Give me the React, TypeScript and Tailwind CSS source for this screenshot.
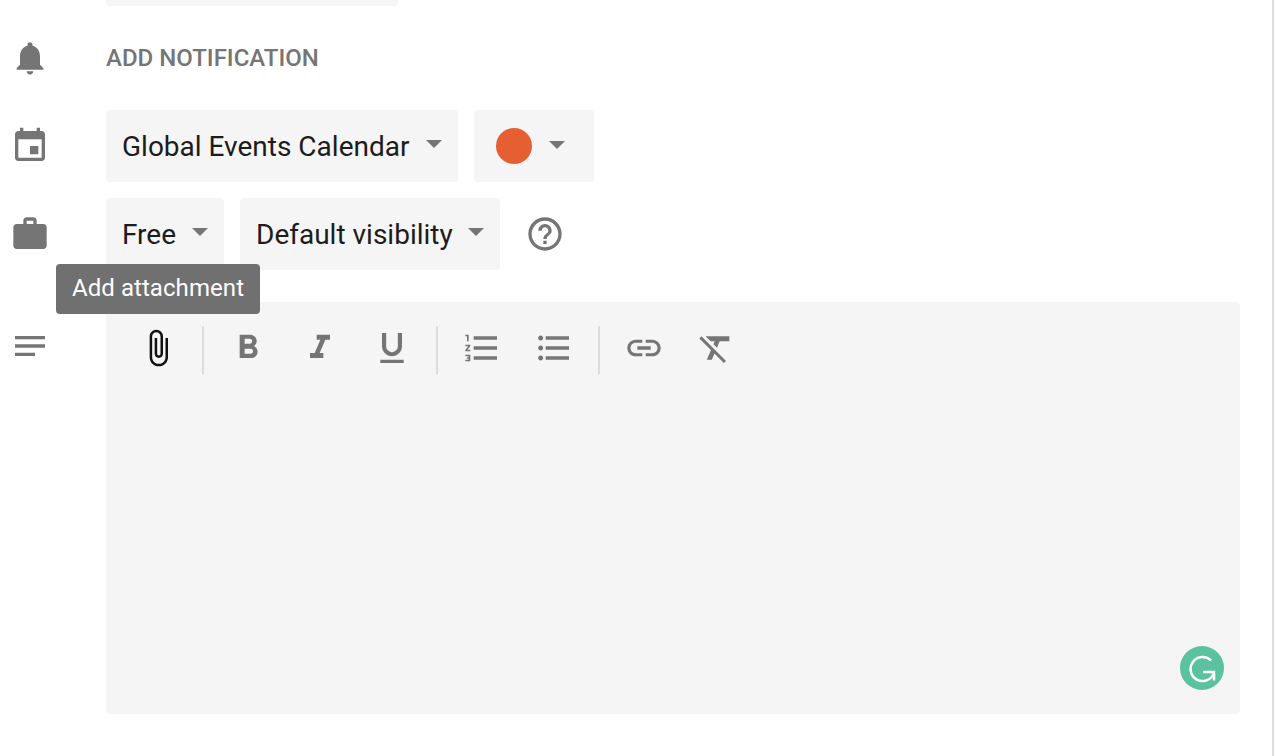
const PATHS = {
  bell: 'M12 22c1.1 0 2-.9 2-2h-4c0 1.1.89 2 2 2zm6-6v-5c0-3.07-1.64-5.64-4.5-6.32V4c0-.83-.67-1.5-1.5-1.5s-1.5.67-1.5 1.5v.68C7.63 5.36 6 7.92 6 11v5l-2 2v1h16v-1l-2-2z',
  event: 'M17 12h-5v5h5v-5zM16 1v2H8V1H6v2H5c-1.11 0-1.99.9-1.99 2L3 19c0 1.1.89 2 2 2h14c1.1 0 2-.9 2-2V5c0-1.1-.9-2-2-2h-1V1h-2zm3 18H5V8h14v11z',
  work: 'M20 6h-4V4c0-1.11-.89-2-2-2h-4c-1.11 0-2 .89-2 2v2H4c-1.11 0-1.99.89-1.99 2L2 19c0 1.11.89 2 2 2h16c1.11 0 2-.89 2-2V8c0-1.11-.89-2-2-2zm-6 0h-4V4h4v2z',
  notes: 'M3 18h12v-2H3v2zM3 6v2h18V6H3zm0 7h18v-2H3v2z',
  help: 'M11 18h2v-2h-2v2zm1-16C6.48 2 2 6.48 2 12s4.48 10 10 10 10-4.48 10-10S17.52 2 12 2zm0 18c-4.41 0-8-3.59-8-8s3.59-8 8-8 8 3.59 8 8-3.59 8-8 8zm0-14c-2.21 0-4 1.79-4 4h2c0-1.1.9-2 2-2s2 .9 2 2c0 2-3 1.75-3 5h2c0-2.25 3-2.5 3-5 0-2.21-1.79-4-4-4z',
  attach: 'M16.5 6v11.5c0 2.21-1.79 4-4 4s-4-1.79-4-4V5c0-1.38 1.12-2.5 2.5-2.5s2.5 1.12 2.5 2.5v10.5c0 .55-.45 1-1 1s-1-.45-1-1V6H10v9.5c0 1.38 1.12 2.5 2.5 2.5s2.5-1.12 2.5-2.5V5c0-2.21-1.79-4-4-4S7 2.79 7 5v12.5c0 3.04 2.46 5.5 5.5 5.5s5.5-2.46 5.5-5.5V6h-1.5z',
  bold: 'M15.6 10.79c.97-.67 1.65-1.77 1.65-2.79 0-2.26-1.75-4-4-4H7v14h7.04c2.09 0 3.71-1.7 3.71-3.79 0-1.52-.86-2.82-2.15-3.42zM10 6.5h3c.83 0 1.5.67 1.5 1.5s-.67 1.5-1.5 1.5h-3v-3zm3.5 9H10v-3h3.5c.83 0 1.5.67 1.5 1.5s-.67 1.5-1.5 1.5z',
  italic: 'M10 4v3h2.21l-3.42 8H6v3h8v-3h-2.21l3.42-8H18V4z',
  underline: 'M12 17c3.31 0 6-2.69 6-6V3h-2.5v8c0 1.93-1.57 3.5-3.5 3.5S8.5 12.93 8.5 11V3H6v8c0 3.31 2.69 6 6 6zm-7 2v2h14v-2H5z',
  numbered: 'M2 17h2v.5H3v1h1v.5H2v1h3v-4H2v1zm1-9h1V4H2v1h1v3zm-1 3h1.8L2 13.1v.9h3v-1H3.2L5 10.9V10H2v1zm5-6v2h14V5H7zm0 14h14v-2H7v2zm0-6h14v-2H7v2z',
  bulleted: 'M4 10.5c-.83 0-1.5.67-1.5 1.5s.67 1.5 1.5 1.5 1.5-.67 1.5-1.5-.67-1.5-1.5-1.5zm0-6c-.83 0-1.5.67-1.5 1.5S3.17 7.5 4 7.5 5.5 6.83 5.5 6 4.83 4.5 4 4.5zm0 12c-.83 0-1.5.68-1.5 1.5s.68 1.5 1.5 1.5 1.5-.68 1.5-1.5-.67-1.5-1.5-1.5zM7 19h14v-2H7v2zm0-6h14v-2H7v2zm0-8v2h14V5H7z',
  link: 'M3.9 12c0-1.71 1.39-3.1 3.1-3.1h4V7H7c-2.76 0-5 2.24-5 5s2.24 5 5 5h4v-1.9H7c-1.71 0-3.1-1.39-3.1-3.1zM8 13h8v-2H8v2zm9-6h-4v1.9h4c1.71 0 3.1 1.39 3.1 3.1s-1.39 3.1-3.1 3.1h-4V17h4c2.76 0 5-2.24 5-5s-2.24-5-5-5z',
  clear: 'M3.27 5L2 6.27l6.97 6.97L6.5 19h3l1.57-3.66L16.73 21 18 19.73 3.55 5.27 3.27 5zM6 5v.18L8.82 8h2.4l-.72 1.68 2.1 2.1L14.21 8H20V5H6z',
};

function MdIcon({ d, className = 'text-[#757575]' }: { d: string; className?: string }) {
  return (
    <svg viewBox="0 0 24 24" fill="currentColor" className={`w-10 h-10 shrink-0 ${className}`}>
      <path d={d} />
    </svg>
  );
}

function Caret({ className = 'mb-1' }: { className?: string }) {
  return <span className={`w-0 h-0 border-x-8 border-x-transparent border-t-8 border-t-[#757575] ${className}`} />;
}

function Select({ label, width }: { label: string; width: string }) {
  return (
    <div className={`${width} h-[72px] px-4 flex items-center justify-between rounded bg-[#f5f5f5] text-[28px] text-[#1c1c1c]`}>
      <span className="pt-[2px]">{label}</span>
      <Caret />
    </div>
  );
}

function ToolButton({ d, className }: { d: string; className?: string }) {
  return (
    <button className="w-[72px] h-12 pt-[2px] flex justify-center items-start">
      <MdIcon d={d} className={className} />
    </button>
  );
}

function Divider() {
  return <div className="w-[2px] h-12 mx-2 bg-[#dcdcdc]" />;
}

function Row({ icon, className, children }: { icon: string; className?: string; children: React.ReactNode }) {
  return (
    <div className={`flex items-center ${className ?? ''}`}>
      <div className="w-[106px] pl-[10px] shrink-0">
        <MdIcon d={icon} />
      </div>
      {children}
    </div>
  );
}

export default function App() {
  return (
    <div className="relative w-[1274px] h-screen overflow-hidden bg-white border-r-2 border-[#dedede] font-['Roboto',sans-serif]">
      <div className="ml-[106px] w-[292px] h-[6px] rounded-b bg-[#f5f5f5]" />

      <Row icon={PATHS.bell} className="h-[104px]">
        <span className="text-2xl font-medium uppercase text-[#757575]">Add notification</span>
      </Row>

      <Row icon={PATHS.event}>
        <div className="flex gap-4">
          <Select label="Global Events Calendar" width="w-[352px]" />
          <div className="w-[120px] h-[72px] pl-[22px] flex items-center gap-[17px] rounded bg-[#f5f5f5]">
            <span className="w-9 h-9 rounded-full bg-[#e65f32]" />
            <Caret className="mb-[2px]" />
          </div>
        </div>
      </Row>

      <Row icon={PATHS.work} className="mt-4">
        <div className="flex gap-4">
          <Select label="Free" width="w-[118px]" />
          <Select label="Default visibility" width="w-[260px]" />
        </div>
        <div className="ml-[25px]">
          <MdIcon d={PATHS.help} />
        </div>
      </Row>

      <div className="flex items-start mt-8">
        <div className="w-[106px] pl-[10px] pt-6 shrink-0">
          <MdIcon d={PATHS.notes} />
        </div>
        <div className="relative w-[1134px] h-[412px] pt-6 px-4 rounded bg-[#f5f5f5]">
          <div className="flex">
            <ToolButton d={PATHS.attach} className="text-[#111111]" />
            <Divider />
            <ToolButton d={PATHS.bold} />
            <ToolButton d={PATHS.italic} />
            <ToolButton d={PATHS.underline} />
            <Divider />
            <ToolButton d={PATHS.numbered} />
            <ToolButton d={PATHS.bulleted} />
            <Divider />
            <ToolButton d={PATHS.link} />
            <ToolButton d={PATHS.clear} />
          </div>
          <div className="absolute right-4 bottom-6 w-11 h-11 rounded-full bg-[#5bc2a0]">
            <svg viewBox="0 0 44 44" className="w-11 h-11" fill="none" stroke="white" strokeWidth="2.5">
              <path d="M31 14.5A12 12 0 1 0 33.5 28" />
              <path d="M23 26h11v8.5" />
            </svg>
          </div>
        </div>
      </div>

      <div className="absolute left-14 top-[264px] w-[204px] h-[50px] pb-[2px] flex items-center justify-center rounded bg-[#707070] text-2xl tracking-[0.07px] text-white">
        Add attachment
      </div>
    </div>
  );
}
